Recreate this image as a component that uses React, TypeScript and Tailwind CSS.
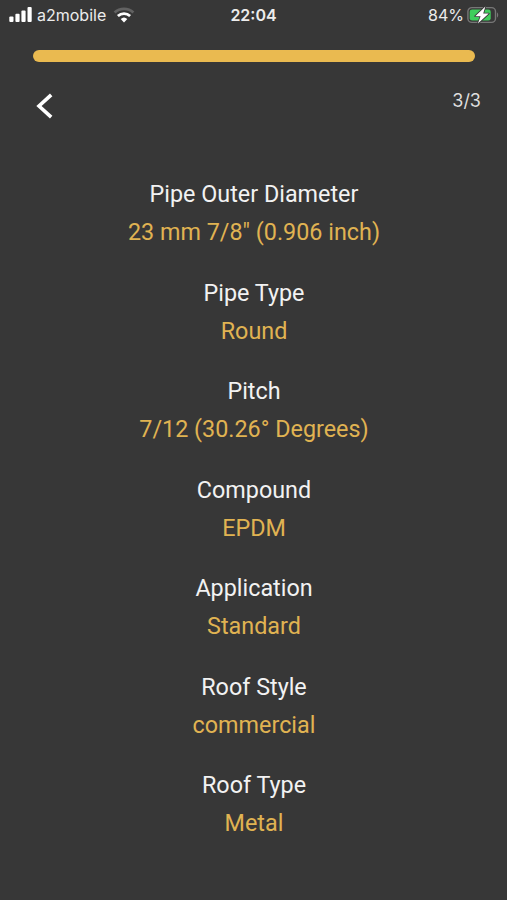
const specs = [
  { label: "Pipe Outer Diameter", value: "23 mm 7/8\" (0.906 inch)" },
  { label: "Pipe Type", value: "Round" },
  { label: "Pitch", value: "7/12 (30.26° Degrees)" },
  { label: "Compound", value: "EPDM" },
  { label: "Application", value: "Standard" },
  { label: "Roof Style", value: "commercial" },
  { label: "Roof Type", value: "Metal" },
];

function SignalIcon() {
  return (
    <svg width="23" height="15" viewBox="0 0 23 15" fill="#fff">
      <rect x="0.3" y="9.5" width="4.2" height="5.5" rx="1" />
      <rect x="6.4" y="6.7" width="4.2" height="8.3" rx="1" />
      <rect x="12.4" y="3.5" width="4.2" height="11.5" rx="1" />
      <rect x="18.5" y="0" width="4.2" height="15" rx="1" />
    </svg>
  );
}

function WifiIcon() {
  return (
    <svg width="22" height="16" viewBox="0 0 22 16" fill="none" strokeWidth="2.8">
      <path d="M1.6 5.5a14 14 0 0 1 18.8 0" stroke="#626262" />
      <path d="M4.9 9a9 9 0 0 1 12.2 0" stroke="#fff" />
      <path d="M11 15.4 7.7 12.1a4.8 4.8 0 0 1 6.6 0Z" fill="#fff" />
    </svg>
  );
}

function BatteryIcon() {
  return (
    <svg width="32" height="18" viewBox="0 0 32 18" fill="none">
      <rect x="0.9" y="1.6" width="27.6" height="14.8" rx="4" stroke="#777" strokeWidth="1.4" />
      <path d="M30 6.5c1.6.6 1.6 4.4 0 5Z" fill="#777" />
      <rect x="2.7" y="3.4" width="21" height="11.2" rx="2.4" fill="#3fce5c" />
      <path
        d="M18.4 0.4 8.2 10.2h5.4L10.9 17.6 21.8 7.6h-5.6Z"
        fill="#fff"
        stroke="#373737"
        strokeWidth="1.6"
        strokeLinejoin="round"
        paintOrder="stroke"
      />
    </svg>
  );
}

function StatusBar() {
  return (
    <div className="grid h-[29px] grid-cols-3 items-center font-['Inter',sans-serif] text-[16px] text-[#ececec]">
      <div className="flex items-center pl-[9px]">
        <SignalIcon />
        <span className="ml-[5px]">a2mobile</span>
        <span className="ml-[7px]">
          <WifiIcon />
        </span>
      </div>
      <div className="text-center font-semibold">22:04</div>
      <div className="flex items-center justify-end pr-2">
        <span className="mr-[3px]">84%</span>
        <BatteryIcon />
      </div>
    </div>
  );
}

export default function App() {
  return (
    <main className="h-[900px] w-[507px] overflow-hidden bg-[#373737] font-['Roboto',sans-serif] text-[#f2f2f2]">
      <StatusBar />
      <div className="mt-[21px] ml-[33px] h-3 w-[442px] rounded-full bg-[#eaba50]" />
      <div className="flex h-[113px] items-start justify-between pt-[25px] pr-[26px] pl-[35px]">
        <button type="button" aria-label="Back" className="mt-[5px]">
          <svg width="20" height="28" viewBox="0 0 20 28" fill="none" stroke="#fff" strokeWidth="3.6">
            <path d="M16.2 2.8 4 14l12.2 11.2" />
          </svg>
        </button>
        <span className="font-['Inter',sans-serif] text-[18px] text-[#dedede]">3/3</span>
      </div>
      <dl className="pl-px text-center text-[23.35px] leading-[38px]">
        {specs.map((s) => (
          <div key={s.label} className="mb-[22.5px]">
            <dt>{s.label}</dt>
            <dd className="text-[#e0b352]">{s.value}</dd>
          </div>
        ))}
      </dl>
    </main>
  );
}
